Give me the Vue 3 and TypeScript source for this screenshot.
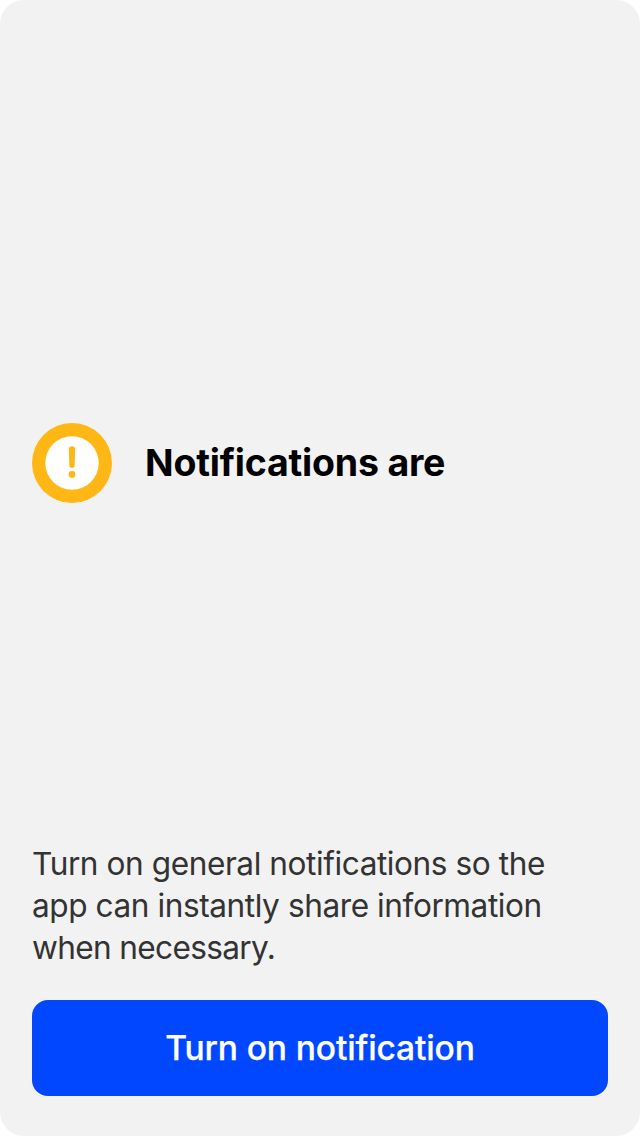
<script setup lang="ts">
const title: string = 'Notifications are'
const lines: string[] = [
  'Turn on general notifications so the',
  'app can instantly share information',
  'when necessary.',
]
const action: string = 'Turn on notification'
</script>

<template>
  <main class="screen">
    <header class="notice">
      <svg class="icon" viewBox="0 0 80 80" aria-hidden="true">
        <circle cx="40" cy="40" r="40" fill="#ffb715" />
        <circle cx="40" cy="40" r="26.7" fill="#fff" />
        <path d="M36.8 26.2C36.8 22.2 43.2 22.2 43.2 26.2L42.6 43.3C42.4 45.6 37.6 45.6 37.4 43.3Z" fill="#ffb715" />
        <circle cx="40" cy="51.4" r="3.4" fill="#ffb715" />
      </svg>
      <h1 class="title">{{ title }}</h1>
    </header>
    <p class="description">
      <span v-for="(line, i) in lines" :key="line" :class="['line', `line-${i + 1}`]">{{ line }}</span>
    </p>
    <button class="action" type="button">{{ action }}</button>
  </main>
</template>

<style>
body {
  background: #fff;
}
</style>

<style scoped>
.screen {
  display: flex;
  flex-direction: column;
  box-sizing: border-box;
  height: 1136px;
  padding: 423px 32px 40px;
  border-radius: 24px;
  background: #f2f2f2;
  font-family: Inter, "Liberation Sans", sans-serif;
  font-optical-sizing: none;
}
.notice {
  display: flex;
  align-items: center;
  gap: 33px;
  height: 80px;
}
.icon {
  width: 80px;
  height: 80px;
}
.title {
  margin: 0;
  color: #000;
  font-size: 37.5px;
  font-weight: 700;
  letter-spacing: -0.2px;
  line-height: 48px;
  white-space: nowrap;
}
.description {
  margin: auto 0 31px;
  color: #333;
  font-size: 31.6px;
  letter-spacing: -0.43px;
  line-height: 42px;
}
.line {
  display: block;
  white-space: nowrap;
}
.line-3 {
  letter-spacing: -0.65px;
}
.action {
  height: 96px;
  padding: 0;
  border: 0;
  border-radius: 16px;
  background: #0047ff;
  color: #fff;
  font: inherit;
  font-size: 33.6px;
  font-weight: 500;
  letter-spacing: -0.14px;
  line-height: 42px;
  -webkit-text-stroke: 0.25px #fff;
}
</style>
